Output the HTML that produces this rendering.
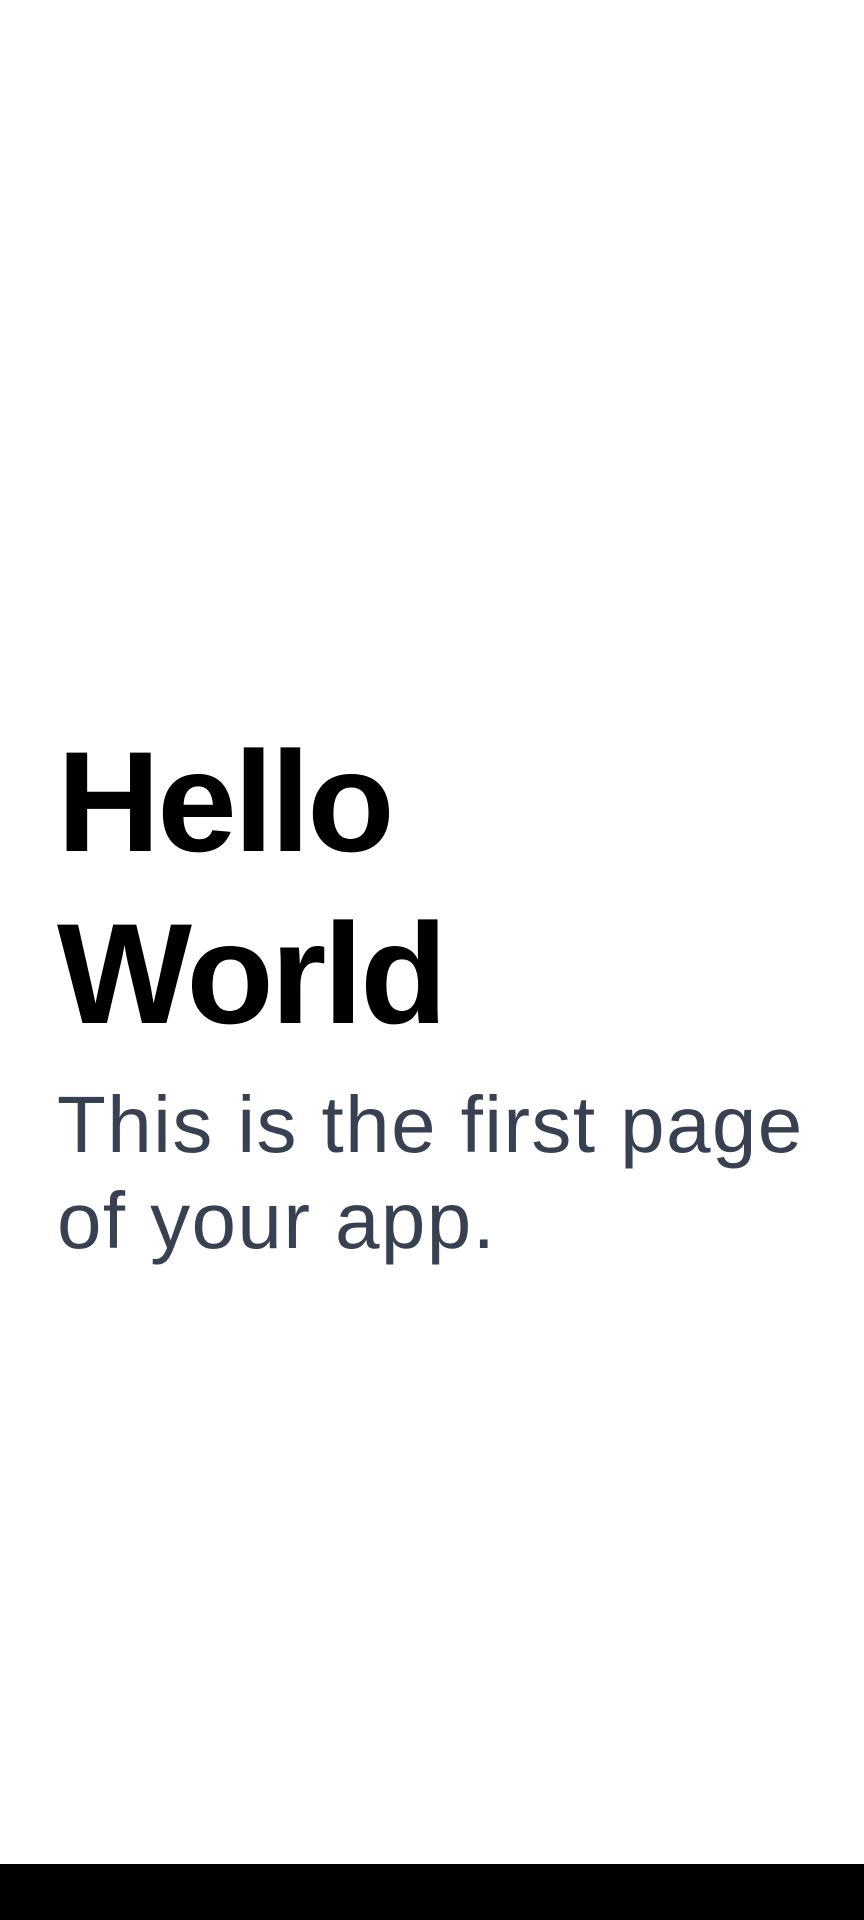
<!DOCTYPE html>
<html>
<head>
<meta charset="utf-8">
<style>
  html,body{margin:0;padding:0;width:864px;height:1920px;background:#fff;overflow:hidden;}
  body{position:relative;font-family:"Liberation Sans",Arial,sans-serif;}
  .h{position:absolute;left:57px;top:717px;font-size:143px;line-height:172px;font-weight:700;color:#000;white-space:nowrap;letter-spacing:-3px;}
  .p{position:absolute;left:57px;top:1077px;font-size:80px;line-height:96px;color:#374151;white-space:nowrap;letter-spacing:1.4px;}
  .bar{position:absolute;left:0;top:1864px;width:864px;height:56px;background:#000;}
</style>
</head>
<body>
  <div class="h">Hello<br>World</div>
  <div class="p">This is the first page<br>of your app.</div>
  <div class="bar"></div>
</body>
</html>
